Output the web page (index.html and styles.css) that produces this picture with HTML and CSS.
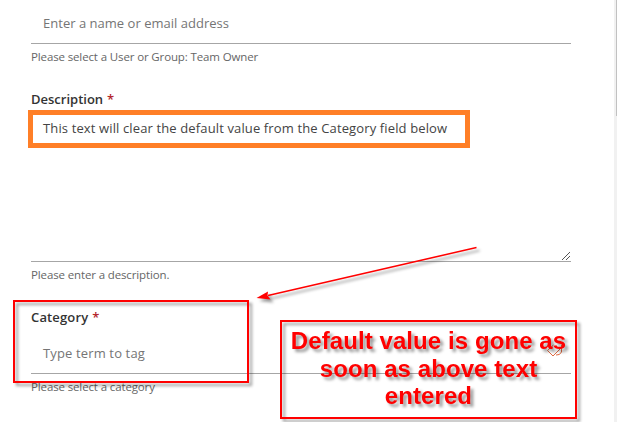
FILE: index.html
```
<!DOCTYPE html>
<html lang="en">
<head>
<meta charset="utf-8">
<title>Edit item</title>
<link rel="stylesheet" href="styles.css">
</head>
<body>
<main class="form">
  <section class="field owner">
    <div class="control"><span class="placeholder">Enter a name or email address</span></div>
    <p class="hint">Please select a User or Group: Team Owner</p>
  </section>
  <section class="field description">
    <div class="label"><span class="name">Description</span><span class="required">*</span></div>
    <div class="control textarea"><span class="value">This text will clear the default value from the Category field below</span>
      <svg class="grip" width="8" height="8" viewBox="0 0 8 8" shape-rendering="crispEdges"><path d="M0 7h1v1h-1zM1 6h1v1h-1zM2 5h1v1h-1zM3 4h1v1h-1zM4 3h1v1h-1zM5 2h1v1h-1zM6 1h1v1h-1zM7 0h1v1h-1zM4 7h1v1h-1zM5 6h1v1h-1zM6 5h1v1h-1zM7 4h1v1h-1z" fill="#555"/></svg>
    </div>
    <p class="hint">Please enter a description.</p>
  </section>
  <section class="field category">
    <div class="label"><span class="name">Category</span><span class="required">*</span></div>
    <div class="control"><span class="placeholder">Type term to tag</span>
      <svg class="tags" width="16" height="13" viewBox="0 0 16 13" fill="none" stroke="#e06a42"><path d="M6.500 1L.5 6.500l5.500 5.500L14.500 3.500V1M14.500 3v5q-1.500 3.500-5.500 3"/></svg>
    </div>
    <p class="hint">Please select a category</p>
  </section>
</main>
<div class="scrollbar"><div class="thumb"></div></div>
<div class="highlight"></div>
<div class="redbox category-box"></div>
<svg class="arrow" width="240" height="70" viewBox="0 0 240 70"><path d="M226.500 7.500L18 55.500" stroke="#f00" stroke-width="1.500"/><path d="M6.500 58L18 51.500L17.500 55.500L20.500 59.500z" fill="#f00"/></svg>
<div class="redbox callout"><span>Default value is gone as</span><span>soon as above text</span><span>entered</span></div>
</body>
</html>
```
FILE: styles.css
```
* { box-sizing: border-box; }
body {
  margin: 0;
  width: 617px;
  height: 422px;
  position: relative;
  overflow: hidden;
  display: flex;
  justify-content: space-between;
  background: #fff;
  color: #333;
  font: 13px/20px "Open Sans", "Noto Sans", sans-serif;
}
.form { width: 571px; padding-left: 31px; }
.control {
  position: relative;
  height: 47px;
  padding: 16px 12px;
  border-bottom: 1px solid #a6a6a6;
  white-space: nowrap;
}
.owner .control { height: 44px; padding-top: 13px; }
.placeholder { color: #757575; letter-spacing: .02px; }
.category .placeholder { letter-spacing: .14px; }
.value { color: #444; letter-spacing: .13px; }
.hint {
  margin: 5px 0 0;
  height: 16px;
  font-size: 11.500px;
  letter-spacing: -.13px;
  line-height: 16px;
  color: #666;
  white-space: nowrap;
}
.description,
.category { padding-top: 24px; }
.label { height: 20px; display: flex; gap: 4px; font-weight: 600; }
.category .name { letter-spacing: .15px; }
.required { color: #b4262c; }
.control.textarea { height: 153px; padding-top: 9px; }
.grip { position: absolute; right: 1px; bottom: 1px; }
.tags { position: absolute; right: 8px; top: 17px; }
.scrollbar { width: 3px; height: 422px; background: #f1f1f1; padding-left: 2px; }
.thumb { height: 116px; background: #c1c1c1; }
.highlight {
  position: absolute;
  left: 28px; top: 110px;
  width: 442px; height: 38px;
  border: 5px solid #ff7f27;
}
.redbox {
  position: absolute;
  border: 2px solid #f00;
  filter: drop-shadow(3px 3px 1.500px rgba(0, 0, 0, .4));
}
.category-box { left: 13px; top: 300px; width: 236px; height: 83px; }
.arrow { position: absolute; left: 250px; top: 240px; filter: drop-shadow(3px 3px 1.500px rgba(0, 0, 0, .4)); }
.callout {
  left: 280px; top: 320px;
  width: 297px; height: 99px;
  padding-top: 5px;
  display: flex;
  flex-direction: column;
  align-items: center;
  color: #f00;
  font: bold 24px/27.500px "Liberation Sans", Arial, sans-serif;
  letter-spacing: .08px;
  white-space: nowrap;
}
```
